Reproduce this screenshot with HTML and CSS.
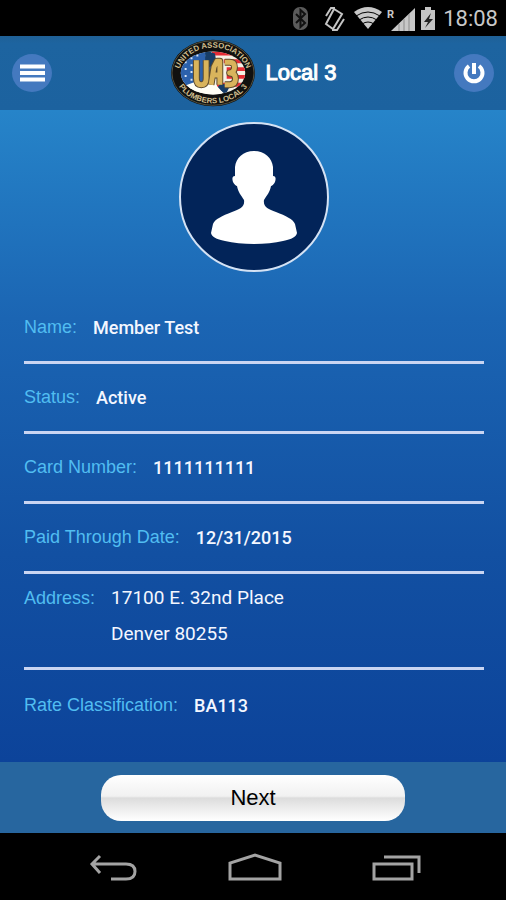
FILE: index.html
```html
<!DOCTYPE html>
<html lang="en">
<head>
    <meta charset="UTF-8">
    <meta name="viewport" content="width=device-width, initial-scale=1.0">
    <title>Local 3</title>
    <link rel="stylesheet" href="styles.css">
</head>
<body>
    <div class="status-bar">
        <svg width="148" height="28" viewBox="0 0 148 28" aria-hidden="true">
            <!-- bluetooth -->
            <rect x="3" y="3" width="15" height="23" rx="7" fill="#5b5b5b"/>
            <path d="M6 10l9 9-4.500 4V6l4.500 4-9 9" fill="none" stroke="#111" stroke-width="2"/>
            <!-- rotation -->
            <path d="M44 5l8 5-9 15-7-5z" fill="none" stroke="#c4c4c4" stroke-width="2"/>
            <path d="M36 12l5-8h4M54 15l-7 11h-5" fill="none" stroke="#c4c4c4" stroke-width="2"/>
            <!-- wifi -->
            <path d="M64 8q14-10 28 0L78 25z" fill="#c8c8c8"/>
            <path d="M66 12q12-8 24 0M69 16q9-6 18 0M72 20q6-4 12 0" fill="none" stroke="#000" stroke-width="1"/>
            <!-- signal -->
            <text x="97" y="14" class="roaming">R</text>
            <path d="M101 27L125 4v23z" fill="#c8c8c8"/>
            <path d="M109 27v-7M114 27V15M119 27V10" stroke="#8c8c8c" stroke-width="1"/>
            <!-- battery -->
            <path d="M131 6h4V3h6v3h4v20h-14z" fill="#c4c4c4"/>
            <path d="M141 9l-7 9h4l-3 6 8-9h-4z" fill="#222"/>
        </svg>
        <span class="clock">18:08</span>
    </div>

    <header class="top-bar">
        <button class="round-button" aria-label="Menu">
            <svg width="40" height="38" viewBox="0 0 40 38">
                <path d="M8 12.500h25M8 19h25M8 25.500h25" stroke="#fff" stroke-width="4"/>
            </svg>
        </button>
        <div class="brand">
            <svg class="logo" width="86" height="70" viewBox="0 0 88 70" role="img" aria-label="United Association Plumbers Local 3">
                <defs>
                    <path id="arcTop" d="M8 40a36 31 0 0 1 72 0"/>
                    <path id="arcBottom" d="M4 33a40 33 0 0 0 80 0"/>
                    <clipPath id="flag"><ellipse cx="44" cy="35" rx="33" ry="22"/></clipPath>
                </defs>
                <ellipse cx="44" cy="35" rx="43" ry="34" fill="#11110f"/>
                <ellipse cx="44" cy="35" rx="42" ry="33" fill="none" stroke="#55523f" stroke-width="1"/>
                <g clip-path="url(#flag)">
                    <path fill="#f5f1e6" d="M0 0h88v70H0z"/>
                    <path fill="#2c61ac" d="M0 0h42v42L24 49H0z"/>
                    <path d="M43 15h42M55 23h32M58 31h30M58 39h30M48 47h30" stroke="#e52c35" stroke-width="4"/>
                    <path d="M15 24h2M21 20h2M27 17h2M15 31h2M21 27h2M15 38h2M21 34h2M21 42h2M27 46h2M36 17h2" stroke="#d9e5f5" stroke-width="2"/>
                    <path d="M36 12l10 3 2 12-12 3zM52 46l10 1-5 10-9-7z" fill="#173d68"/>
                    <path d="M10 50l16-6 8 4 10-4 10 11-4 6H20z" fill="#fffef5"/>
                </g>
                <path class="monogram-edge" d="M27 22v18q0 7 5 7t5-7V22M42 47l3-18 3-6h3v24M43 37h8M56 24h5q5 0 5 5t-5 6q6 0 6 6t-6 6h-5"/>
                <path class="monogram" d="M27 22v18q0 7 5 7t5-7V22M42 47l3-18 3-6h3v24M43 37h8M56 24h5q5 0 5 5t-5 6q6 0 6 6t-6 6h-5"/>
                <text class="logo-text"><textPath href="#arcTop" startOffset="50%" text-anchor="middle">UNITED ASSOCIATION</textPath></text>
                <text class="logo-text"><textPath href="#arcBottom" startOffset="50%" text-anchor="middle">PLUMBERS LOCAL 3</textPath></text>
            </svg>
            <h1>Local 3</h1>
        </div>
        <button class="round-button" aria-label="Log out">
            <svg width="40" height="38" viewBox="0 0 40 38">
                <path d="M15 12a8.500 8.500 0 1 0 10 0M20 9v11" fill="none" stroke="#fff" stroke-width="4"/>
            </svg>
        </button>
    </header>

    <main>
        <div class="avatar">
            <svg width="86" height="93" viewBox="0 0 86 93" aria-hidden="true">
                <path fill="#fff" d="M43 0C32 0 25 7 24 16v9c-3 0-3 3-2 6 1 2 3 4 4 4 1 6 4 9 7 14 1 7-4 9-12 12C11 65 4 68 2 73L0 82c1 4 5 6 14 8 16 4 42 4 58 0 9-2 13-4 14-8l-2-9c-2-5-9-8-19-12-8-3-13-5-12-12 3-5 6-8 7-14 1 0 3-2 4-4 1-3 1-6-2-6v-9C61 7 54 0 43 0z"/>
            </svg>
        </div>

        <dl class="details">
            <div class="row">
                <dt>Name:</dt>
                <dd>Member Test</dd>
            </div>
            <div class="row">
                <dt>Status:</dt>
                <dd>Active</dd>
            </div>
            <div class="row">
                <dt>Card Number:</dt>
                <dd>1111111111</dd>
            </div>
            <div class="row">
                <dt>Paid Through Date:</dt>
                <dd>12/31/2015</dd>
            </div>
            <div class="row address">
                <dt>Address:</dt>
                <dd>17100 E. 32nd Place<br>Denver 80255</dd>
            </div>
            <div class="row">
                <dt>Rate Classification:</dt>
                <dd>BA113</dd>
            </div>
        </dl>
    </main>

    <footer class="actions">
        <button class="next">Next</button>
    </footer>

    <nav class="nav-bar">
        <button aria-label="Back">
            <svg width="50" height="32" viewBox="0 0 50 32">
                <path d="M12 5L4 13l8 9M4 13h34q9 0 9 7.500T38 28H23" fill="none" stroke="#a3a3a3" stroke-width="3"/>
            </svg>
        </button>
        <button aria-label="Home">
            <svg width="54" height="32" viewBox="0 0 54 32">
                <path d="M2 28V12L27 4l25 8v16z" fill="none" stroke="#a3a3a3" stroke-width="3"/>
            </svg>
        </button>
        <button aria-label="Recent apps">
            <svg width="50" height="32" viewBox="0 0 50 32">
                <path d="M2 13h38v15H2zM12 6h35v16" fill="none" stroke="#a3a3a3" stroke-width="3"/>
            </svg>
        </button>
    </nav>
</body>
</html>
```
FILE: styles.css
```css
* {
    box-sizing: border-box;
}

body {
    margin: 0;
    min-height: 100vh;
    display: flex;
    flex-direction: column;
    background: #000;
    font-family: 'Liberation Sans', Arial, sans-serif;
}

button {
    padding: 0;
    border: none;
    background: none;
    cursor: pointer;
}

svg {
    display: block;
}

.status-bar {
    height: 36px;
    padding: 0 8px;
    display: flex;
    justify-content: flex-end;
    align-items: center;
    gap: 5px;
    background: #000;
}

.clock {
    color: #c8c8c8;
    font-family: Roboto, sans-serif;
    font-size: 22px;
}

.roaming {
    fill: #c8c8c8;
    font-family: Roboto, sans-serif;
    font-size: 11px;
    font-weight: bold;
}

.top-bar {
    height: 74px;
    padding: 0 12px;
    display: flex;
    justify-content: space-between;
    align-items: center;
    background: linear-gradient(#1f6096, #1d64a0 10%, #1c629f);
}

.round-button {
    border-radius: 50%;
    background: #4479bf;
}

.brand {
    display: flex;
    align-items: center;
    gap: 10px;
}

.brand h1 {
    margin: 0;
    color: #fff;
    font-size: 22px;
    font-weight: normal;
    -webkit-text-stroke: 1px #fff;
}

.logo-text {
    fill: #d0bf90;
    font-size: 8px;
    font-weight: bold;
}

.monogram,
.monogram-edge {
    fill: none;
    stroke: #d9b45c;
    stroke-width: 5;
    stroke-linejoin: round;
}

.monogram-edge {
    stroke: #5d4a2c;
    stroke-width: 7;
}

main {
    flex: 1;
    padding: 12px 22px 22px 24px;
    background: linear-gradient(#2684c9, #1b65b3 32%, #1250a2 68%, #0c439a);
}

.avatar {
    width: 150px;
    height: 150px;
    margin: 0 auto 22px;
    display: flex;
    justify-content: center;
    align-items: center;
    border: 2px solid #d4e2f4;
    border-radius: 50%;
    background: #022459;
}

.details {
    margin: 0;
}

.row {
    min-height: 70px;
    display: flex;
    align-items: center;
    gap: 16px;
    border-bottom: 3px solid #c9d5f2;
    font-size: 18px;
}

.row:last-child {
    border-bottom: none;
}

.row dt {
    color: #51bdf1;
}

.row dd {
    margin: 0;
    color: #f4f7ff;
    font-family: Roboto, sans-serif;
    font-weight: 500;
}

.address {
    min-height: 96px;
    padding-top: 6px;
    align-items: flex-start;
    line-height: 36px;
}

.address dd {
    font-size: 19px;
    font-weight: normal;
}

.actions {
    height: 71px;
    display: flex;
    justify-content: center;
    align-items: center;
    background: #27669f;
}

.next {
    width: 60%;
    height: 46px;
    border-radius: 20px;
    background: linear-gradient(#fff, #f1f1f1 46%, #dcdcdc 50%, #eee 75%, #fff);
    color: #000;
    font-family: inherit;
    font-size: 22px;
}

.nav-bar {
    height: 67px;
    padding: 0 84px 0 88px;
    display: flex;
    justify-content: space-between;
    align-items: center;
    background: #000;
}
```
